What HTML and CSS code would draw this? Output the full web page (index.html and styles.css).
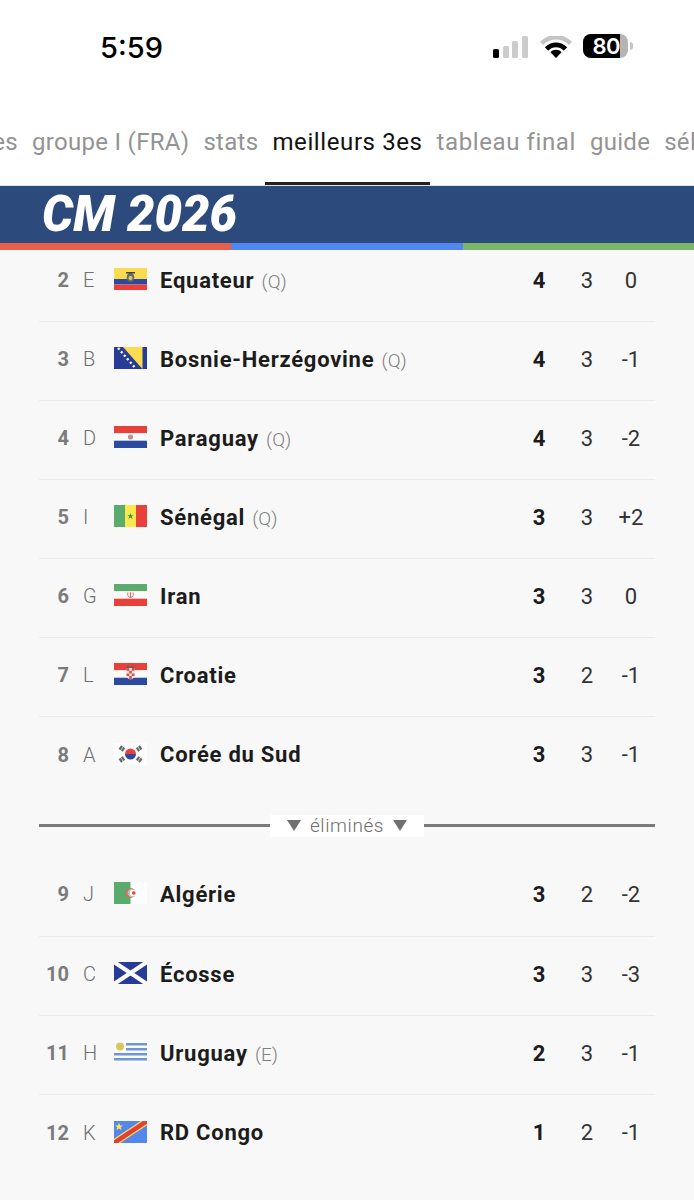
FILE: index.html
```html
<!DOCTYPE html>
<html lang="fr">
<head>
<meta charset="utf-8">
<title>CM 2026 - meilleurs 3es</title>
<link rel="stylesheet" href="styles.css">
</head>
<body>
<div class="status">
  <span class="time">5:59</span>
  <div class="status-icons">
    <svg class="signal" width="36" height="22" viewBox="0 0 36 22">
      <rect x="0" y="13" width="6" height="9" rx="1.5" fill="#000"/>
      <rect x="10" y="10" width="6" height="12" rx="1.5" fill="#ccc"/>
      <rect x="19" y="5" width="6" height="17" rx="1.5" fill="#ccc"/>
      <rect x="29" y="0" width="6" height="22" rx="1.5" fill="#ccc"/>
    </svg>
    <svg class="wifi" width="32" height="22" viewBox="0 0 32 22">
      <path d="M1.500 7.500 C9.500 -0.800 22.500 -0.800 30.500 7.500" fill="none" stroke="#c4c4c4" stroke-width="4.600"/>
      <path d="M6.500 13 C12 7.500 20 7.500 25.500 13" fill="none" stroke="#000" stroke-width="4.600"/>
      <path d="M10.500 16.200 C13.500 13 18.500 13 21.500 16.200 L16 22 Z" fill="#000"/>
    </svg>
    <div class="battery">
      <div class="battery-body"><span class="battery-fill">80</span><span class="battery-empty"></span></div>
      <span class="battery-nub"></span>
    </div>
  </div>
</div>

<nav class="tabs">
  <div class="tab-track">
    <a class="tab">groupes</a>
    <a class="tab">groupe I (FRA)</a>
    <a class="tab">stats</a>
    <a class="tab active">meilleurs 3es</a>
    <a class="tab wide">tableau final</a>
    <a class="tab">guide</a>
    <a class="tab">sélections</a>
  </div>
</nav>

<header class="banner">
  <div class="banner-main"><span class="banner-title">CM 2026</span></div>
  <div class="stripe"><span class="s-red"></span><span class="s-blue"></span><span class="s-green"></span></div>
</header>

<main class="list">
  <div class="row">
    <span class="rank">2</span><span class="grp">E</span>
    <svg class="flag" viewBox="0 0 33 22"><rect width="33" height="11" fill="#fbdb4f"/><rect y="11" width="33" height="5.500" fill="#2b4aa0"/><rect y="16.500" width="33" height="5.500" fill="#e8413c"/><ellipse cx="16.500" cy="9.500" rx="3.800" ry="4.600" fill="#5e6f6a"/><circle cx="16.500" cy="10" r="2" fill="#e3c85a"/><path d="M12 4h9v1.500h-9z" fill="#4a3b2a"/></svg>
    <span class="name">Equateur <small>(Q)</small></span>
    <b class="pts">4</b><span class="num">3</span><span class="diff">0</span>
  </div>
  <div class="row">
    <span class="rank">3</span><span class="grp">B</span>
    <svg class="flag" viewBox="0 0 33 22"><rect width="33" height="22" fill="#283c96"/><path d="M9 0H28.500V22Z" fill="#fbdb4f"/><path d="M4 1l1.500 1.500M7 4.500l1.500 1.500M10 8l1.500 1.500M13 11.500l1.500 1.500M16 15l1.500 1.500M19 18.500l1.500 1.500" stroke="#fff" stroke-width="2.400"/></svg>
    <span class="name">Bosnie-Herzégovine <small>(Q)</small></span>
    <b class="pts">4</b><span class="num">3</span><span class="diff">-1</span>
  </div>
  <div class="row">
    <span class="rank">4</span><span class="grp">D</span>
    <svg class="flag" viewBox="0 0 33 22"><rect width="33" height="7.300" fill="#e8413c"/><rect y="7.300" width="33" height="7.400" fill="#fafafa"/><rect y="14.700" width="33" height="7.300" fill="#2b4aa0"/><circle cx="16.500" cy="11" r="2.600" fill="#c08f94"/></svg>
    <span class="name">Paraguay <small>(Q)</small></span>
    <b class="pts">4</b><span class="num">3</span><span class="diff">-2</span>
  </div>
  <div class="row">
    <span class="rank">5</span><span class="grp">I</span>
    <svg class="flag" viewBox="0 0 33 22"><rect width="11" height="22" fill="#5aab6c"/><rect x="11" width="11" height="22" fill="#fbe84f"/><rect x="22" width="11" height="22" fill="#e8413c"/><path d="M16.500 8l.9 2.200h2.300l-1.900 1.400.8 2.300-2.100-1.400-2.100 1.400.8-2.300-1.900-1.400h2.300z" fill="#3d9a56"/></svg>
    <span class="name">Sénégal <small>(Q)</small></span>
    <b class="pts">3</b><span class="num">3</span><span class="diff">+2</span>
  </div>
  <div class="row">
    <span class="rank">6</span><span class="grp">G</span>
    <svg class="flag" viewBox="0 0 33 22"><rect width="33" height="7.300" fill="#5aab6c"/><rect y="7.300" width="33" height="7.400" fill="#fafafa"/><rect y="14.700" width="33" height="7.300" fill="#e8413c"/><path d="M14 8.500c-1 2.500 0 4.500 2.500 5 2.500-.5 3.500-2.500 2.500-5M16.500 8v5.500" fill="none" stroke="#e2675f" stroke-width="1"/></svg>
    <span class="name">Iran</span>
    <b class="pts">3</b><span class="num">3</span><span class="diff">0</span>
  </div>
  <div class="row">
    <span class="rank">7</span><span class="grp">L</span>
    <svg class="flag" viewBox="0 0 33 22"><rect width="33" height="7.300" fill="#e8413c"/><rect y="7.300" width="33" height="7.400" fill="#fafafa"/><rect y="14.700" width="33" height="7.300" fill="#2b4aa0"/><path d="M12.500 3h8v2h-8z" fill="#7a5a52"/><path d="M12.500 5h8v8c0 2-2 3-4 3.500-2-.5-4-1.500-4-3.500z" fill="#f4e8e8"/><path d="M12.500 5h2.700v2.700h-2.700zM17.800 5h2.700v2.700h-2.700zM15.200 7.700h2.600v2.700h-2.600zM12.500 10.400h2.700v2.700h-2.700zM17.800 10.400h2.700v2.700h-2.700zM15.200 13.100h2.600v3h-2.600z" fill="#df4a45"/></svg>
    <span class="name">Croatie</span>
    <b class="pts">3</b><span class="num">2</span><span class="diff">-1</span>
  </div>
  <div class="row plain">
    <span class="rank">8</span><span class="grp">A</span>
    <svg class="flag" viewBox="0 0 33 22"><rect width="33" height="22" fill="#fdfdfd"/><path d="M11 11a5.500 5.500 0 0 1 11 0z" fill="#e8413c"/><path d="M11 11a5.500 5.500 0 0 0 11 0z" fill="#2b4aa0"/><path d="M8 3l-2.500 3.500M10.300 4.700l-2.500 3.500M25 3l2.500 3.500M22.700 4.700l2.500 3.500M8 19l-2.500-3.500M10.300 17.300l-2.500-3.500M25 19l2.500-3.500M22.700 17.300l2.500-3.500" stroke="#666" stroke-width="2.200"/></svg>
    <span class="name">Corée du Sud</span>
    <b class="pts">3</b><span class="num">3</span><span class="diff">-1</span>
  </div>

  <div class="cut">
    <span class="cut-line"></span>
    <span class="cut-label"><i class="tri"></i>éliminés<i class="tri"></i></span>
    <span class="cut-line"></span>
  </div>

  <div class="row after-cut">
    <span class="rank">9</span><span class="grp">J</span>
    <svg class="flag" viewBox="0 0 33 22"><rect width="33" height="22" fill="#fdfdfd"/><rect width="16.500" height="22" fill="#5aab6c"/><circle cx="16.500" cy="11" r="5" fill="#e2675f"/><circle cx="17.800" cy="11" r="4.200" fill="#9fc9a6"/><circle cx="19" cy="11" r="3.200" fill="#fdfdfd"/><circle cx="19.800" cy="11" r="1.800" fill="#e8413c"/></svg>
    <span class="name">Algérie</span>
    <b class="pts">3</b><span class="num">2</span><span class="diff">-2</span>
  </div>
  <div class="row">
    <span class="rank">10</span><span class="grp">C</span>
    <svg class="flag" viewBox="0 0 33 22"><rect width="33" height="22" fill="#283c96"/><path d="M0 0L33 22M33 0L0 22" stroke="#fbfbfb" stroke-width="4.200"/></svg>
    <span class="name">Écosse</span>
    <b class="pts">3</b><span class="num">3</span><span class="diff">-3</span>
  </div>
  <div class="row">
    <span class="rank">11</span><span class="grp">H</span>
    <svg class="flag" viewBox="0 0 33 22"><rect width="33" height="22" fill="#fbfbfb"/><path d="M12 2h21v2.400H12zM12 7h21v2.400H12zM0 12h33v2.400H0zM0 17h33v2.400H0z" fill="#6f96dc"/><circle cx="6" cy="5.500" r="4" fill="#d9c65c"/></svg>
    <span class="name">Uruguay <small>(E)</small></span>
    <b class="pts">2</b><span class="num">3</span><span class="diff">-1</span>
  </div>
  <div class="row plain">
    <span class="rank">12</span><span class="grp">K</span>
    <svg class="flag" viewBox="0 0 33 22"><rect width="33" height="22" fill="#5487ee"/><path d="M0 22L33 0" stroke="#fbdb4f" stroke-width="7"/><path d="M0 22L33 0" stroke="#e0403a" stroke-width="4.500"/><path d="M5 1.500l1.100 2.900h3l-2.400 1.800.9 3-2.600-1.800-2.600 1.800.9-3-2.400-1.800h3z" fill="#fbe84f"/></svg>
    <span class="name">RD Congo</span>
    <b class="pts">1</b><span class="num">2</span><span class="diff">-1</span>
  </div>
</main>
</body>
</html>
```
FILE: styles.css
```css
* { box-sizing: border-box; }
html, body { margin: 0; padding: 0; }
body {
  width: 694px;
  height: 1200px;
  overflow: hidden;
  background: #f8f8f8;
  font-family: Roboto, "Noto Sans", sans-serif;
  color: #1c1c1c;
}

/* status bar */
.status {
  height: 95px;
  background: #fff;
  display: flex;
  justify-content: space-between;
  align-items: flex-start;
  padding: 30px 61px 0 100px;
}
.time {
  font-family: Inter, "Liberation Sans", sans-serif;
  font-size: 29px;
  font-weight: 500;
  line-height: 36px;
  color: #000;
}
.status-icons { display: flex; align-items: flex-start; margin-top: 5px; }
.signal { display: block; margin-top: 1px; }
.wifi { display: block; margin: 1px 0 0 11px; }
.battery { display: flex; align-items: center; margin: -1px 0 0 11px; }
.battery-body {
  width: 45px;
  height: 24px;
  border-radius: 8px;
  overflow: hidden;
  display: flex;
  background: #b5b5b5;
}
.battery-fill {
  width: 37px;
  background: #000;
  color: #fff;
  font-family: Inter, "Liberation Sans", sans-serif;
  font-size: 22px;
  font-weight: 600;
  line-height: 24px;
  letter-spacing: -0.5px;
  text-align: right;
}
.battery-empty { flex: 1; }
.battery-nub {
  width: 3px;
  height: 8px;
  margin-left: 2px;
  border-radius: 0 3px 3px 0;
  background: #c4c4c4;
}

/* tabs */
.tabs {
  height: 91px;
  background: #fff;
  overflow: hidden;
  border-bottom: 1px solid #dfe3e8;
}
.tab-track {
  display: flex;
  height: 90px;
  margin-left: -78px;
  white-space: nowrap;
}
.tab {
  flex: none;
  height: 90px;
  padding: 32px 7px 0;
  font-size: 24px;
  font-weight: 400;
  line-height: 30px;
  letter-spacing: 0.3px;
  color: #939393;
}
.tab.wide { letter-spacing: 0.6px; }
.tab.active {
  color: #111;
  letter-spacing: 0.6px;
  border-bottom: 3px solid #222;
}

/* banner */
.banner { position: relative; z-index: 2; }
.banner-main {
  height: 57px;
  background: #2c4a7c;
  padding-left: 42px;
  display: flex;
  align-items: center;
}
.banner-title {
  font-size: 49px;
  line-height: 57px;
  font-weight: 900;
  font-style: italic;
  color: #fff;
}
.stripe { display: flex; height: 7px; }
.stripe span { flex: 1; }
.s-red { background: #e8604c; }
.s-blue { background: #5487ee; }
.s-green { background: #7db568; }

/* table */
.list { margin: -7px 39px 0; }
.row {
  height: 79px;
  display: flex;
  align-items: center;
  border-bottom: 1px solid #ebebeb;
  padding-bottom: 4px;
}
.row.plain { border-bottom: 0; }
.row.after-cut { height: 80px; padding-bottom: 5px; }
.rank {
  flex: none;
  width: 30px;
  text-align: right;
  font-size: 20px;
  font-weight: 700;
  color: #7b7b7b;
}
.grp {
  flex: none;
  width: 45px;
  padding-left: 14px;
  font-size: 20px;
  font-weight: 300;
  color: #6f6f6f;
}
.flag { flex: none; display: block; width: 33px; height: 22px; margin: 0 13px 2px 0; }
.name {
  flex: 1;
  font-size: 22px;
  font-weight: 700;
  letter-spacing: 0.75px;
  white-space: nowrap;
  color: #1c1c1c;
}
.name small {
  font-size: 19px;
  font-weight: 300;
  letter-spacing: 0;
  color: #808080;
  margin-left: 1px;
}
.pts, .num, .diff { flex: none; text-align: center; font-size: 22px; }
.pts { width: 48px; font-weight: 700; color: #1c1c1c; }
.num { width: 48px; font-weight: 400; color: #333; }
.diff { width: 40px; margin-right: 4px; font-weight: 400; color: #333; }

/* separator */
.cut { height: 61px; padding-bottom: 2px; display: flex; align-items: center; }
.cut-line { flex: 1; height: 3px; background: #7a7a7a; }
.cut-label {
  width: 154px;
  height: 22px;
  background: #fff;
  display: flex;
  align-items: center;
  justify-content: center;
  gap: 9px;
  font-size: 19px;
  font-weight: 300;
  letter-spacing: 0.6px;
  color: #6d6d6d;
}
.tri {
  width: 0;
  height: 0;
  border-left: 7px solid transparent;
  border-right: 7px solid transparent;
  border-top: 11px solid #707070;
}
```
